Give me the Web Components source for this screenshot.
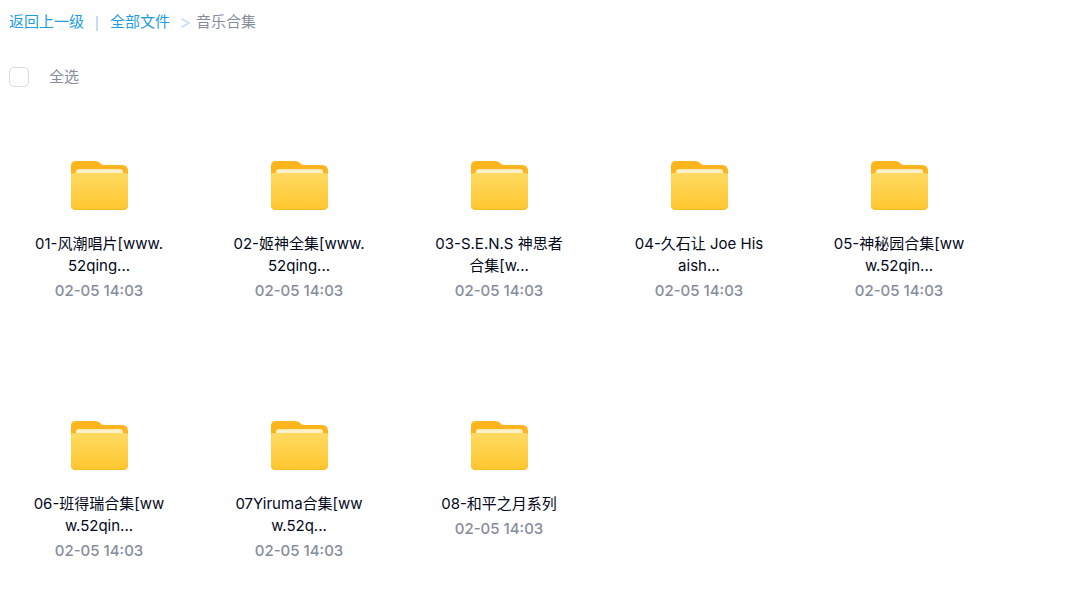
<!DOCTYPE html>
<html lang="zh-CN">
<head>
<meta charset="utf-8">
<title>音乐合集</title>
<style>
body { margin: 0; background: #fff; font: 15px/22px Inter, "Noto Sans CJK SC", sans-serif; color: #03081a; }
</style>
</head>
<body>
<file-browser></file-browser>
<script>
const define = (name, html, setup) => {
  const template = document.createElement('template');
  template.innerHTML = html;
  customElements.define(name, class extends HTMLElement {
    constructor() {
      super();
      this.attachShadow({ mode: 'open' }).append(template.content.cloneNode(true));
    }
    connectedCallback() { if (setup) setup(this, this.shadowRoot); }
  });
};

define('path-trail', `
  <style>
    :host { display: block; color: #878c9c; }
    nav { display: flex; align-items: center; height: 22px; }
    a { color: #1d9de0; text-decoration: none; }
    .bar { width: 2px; height: 15px; margin: 2px 12px 0; background: #c4dbfe; }
    svg { margin: 2px 6px 0 11px; }
  </style>
  <nav aria-label="路径">
    <a href="#up">返回上一级</a><span class="bar"></span><a href="#all">全部文件</a>
    <svg width="9" height="10" viewBox="0 0 9 10" fill="none" stroke="#c4dbfe" stroke-width="1.6" aria-hidden="true"><path d="M.5 .8L8 5L.5 9.2"/></svg>
    <span><slot></slot></span>
  </nav>`);

define('select-all', `
  <style>
    :host { display: block; color: #878c9c; }
    label { display: inline-flex; align-items: center; gap: 20px; }
    input { appearance: none; box-sizing: border-box; width: 20px; height: 20px; margin: 0; border: 1px solid #d9dbe0; border-radius: 5px; background: #fff; }
    input:checked { background: #09aaff; }
  </style>
  <label><input type="checkbox"><slot></slot></label>`);

define('folder-icon', `
  <style>:host { display: block; } svg { display: block; }</style>
  <svg width="58" height="50" viewBox="0 0 58 50" aria-hidden="true">
    <defs>
      <linearGradient id="back" x2="0" y2="1"><stop stop-color="#ffb61f"/><stop offset="1" stop-color="#fdb31a"/></linearGradient>
      <linearGradient id="front" x2="0" y2="1"><stop stop-color="#ffda62"/><stop offset="1" stop-color="#ffc62e"/></linearGradient>
      <linearGradient id="paper" x2="0" y2="1"><stop stop-color="#ffe9ae"/><stop offset=".5" stop-color="#fff3d3"/><stop offset="1" stop-color="#ffe18a"/></linearGradient>
    </defs>
    <path fill="url(#back)" d="M1 17V6Q1 1 6 1H25Q28 1 29.500 2.500Q31.500 5 34.500 5H52Q58 5 58 11V17H1Z"/>
    <path fill="url(#paper)" d="M6 15V12Q6 9 9 9H50Q53 9 53 12V15Z"/>
    <path fill="url(#front)" d="M1 14.500Q1 13 4 13H55Q58 13 58 14.500V45Q58 50 53 50H6Q1 50 1 45Z"/>
    <path fill="none" stroke="#f8b923" stroke-opacity=".8" d="M1.500 45Q1.500 49.500 6 49.500H53Q57.500 49.500 57.500 45"/>
  </svg>`);

define('file-tile', `
  <style>
    :host { display: block; text-align: center; }
    a { display: flex; flex-direction: column; align-items: center; color: inherit; text-decoration: none; }
    .name { margin-top: 23px; white-space: pre-line; }
    time { margin-top: 3px; color: #878c9c; font-weight: 500; }
  </style>
  <a href="#folder"><folder-icon></folder-icon><span class="name"><slot></slot></span><time></time></a>`,
  (host, root) => { root.querySelector('time').textContent = host.getAttribute('date'); });

define('file-browser', `
  <style>
    :host { display: block; padding: 11px 9px 24px; }
    select-all { margin-top: 33px; }
    .grid { display: grid; grid-template-columns: repeat(auto-fill, 180px); gap: 118px 20px; margin-top: 67px; }
  </style>
  <path-trail>音乐合集</path-trail>
  <select-all>全选</select-all>
  <main class="grid"></main>`,
  (host, root) => {
    const names = ['01-风潮唱片[www.\n52qing...', '02-姬神全集[www.\n52qing...', '03-S.E.N.S 神思者\n合集[w...', '04-久石让 Joe His\naish...', '05-神秘园合集[ww\nw.52qin...', '06-班得瑞合集[ww\nw.52qin...', '07Yiruma合集[ww\nw.52q...', '08-和平之月系列'];
    const grid = root.querySelector('main');
    for (const name of names) {
      const tile = document.createElement('file-tile');
      tile.setAttribute('date', '02-05 14:03');
      tile.textContent = name;
      grid.append(tile);
    }
  });
</script>
</body>
</html>
